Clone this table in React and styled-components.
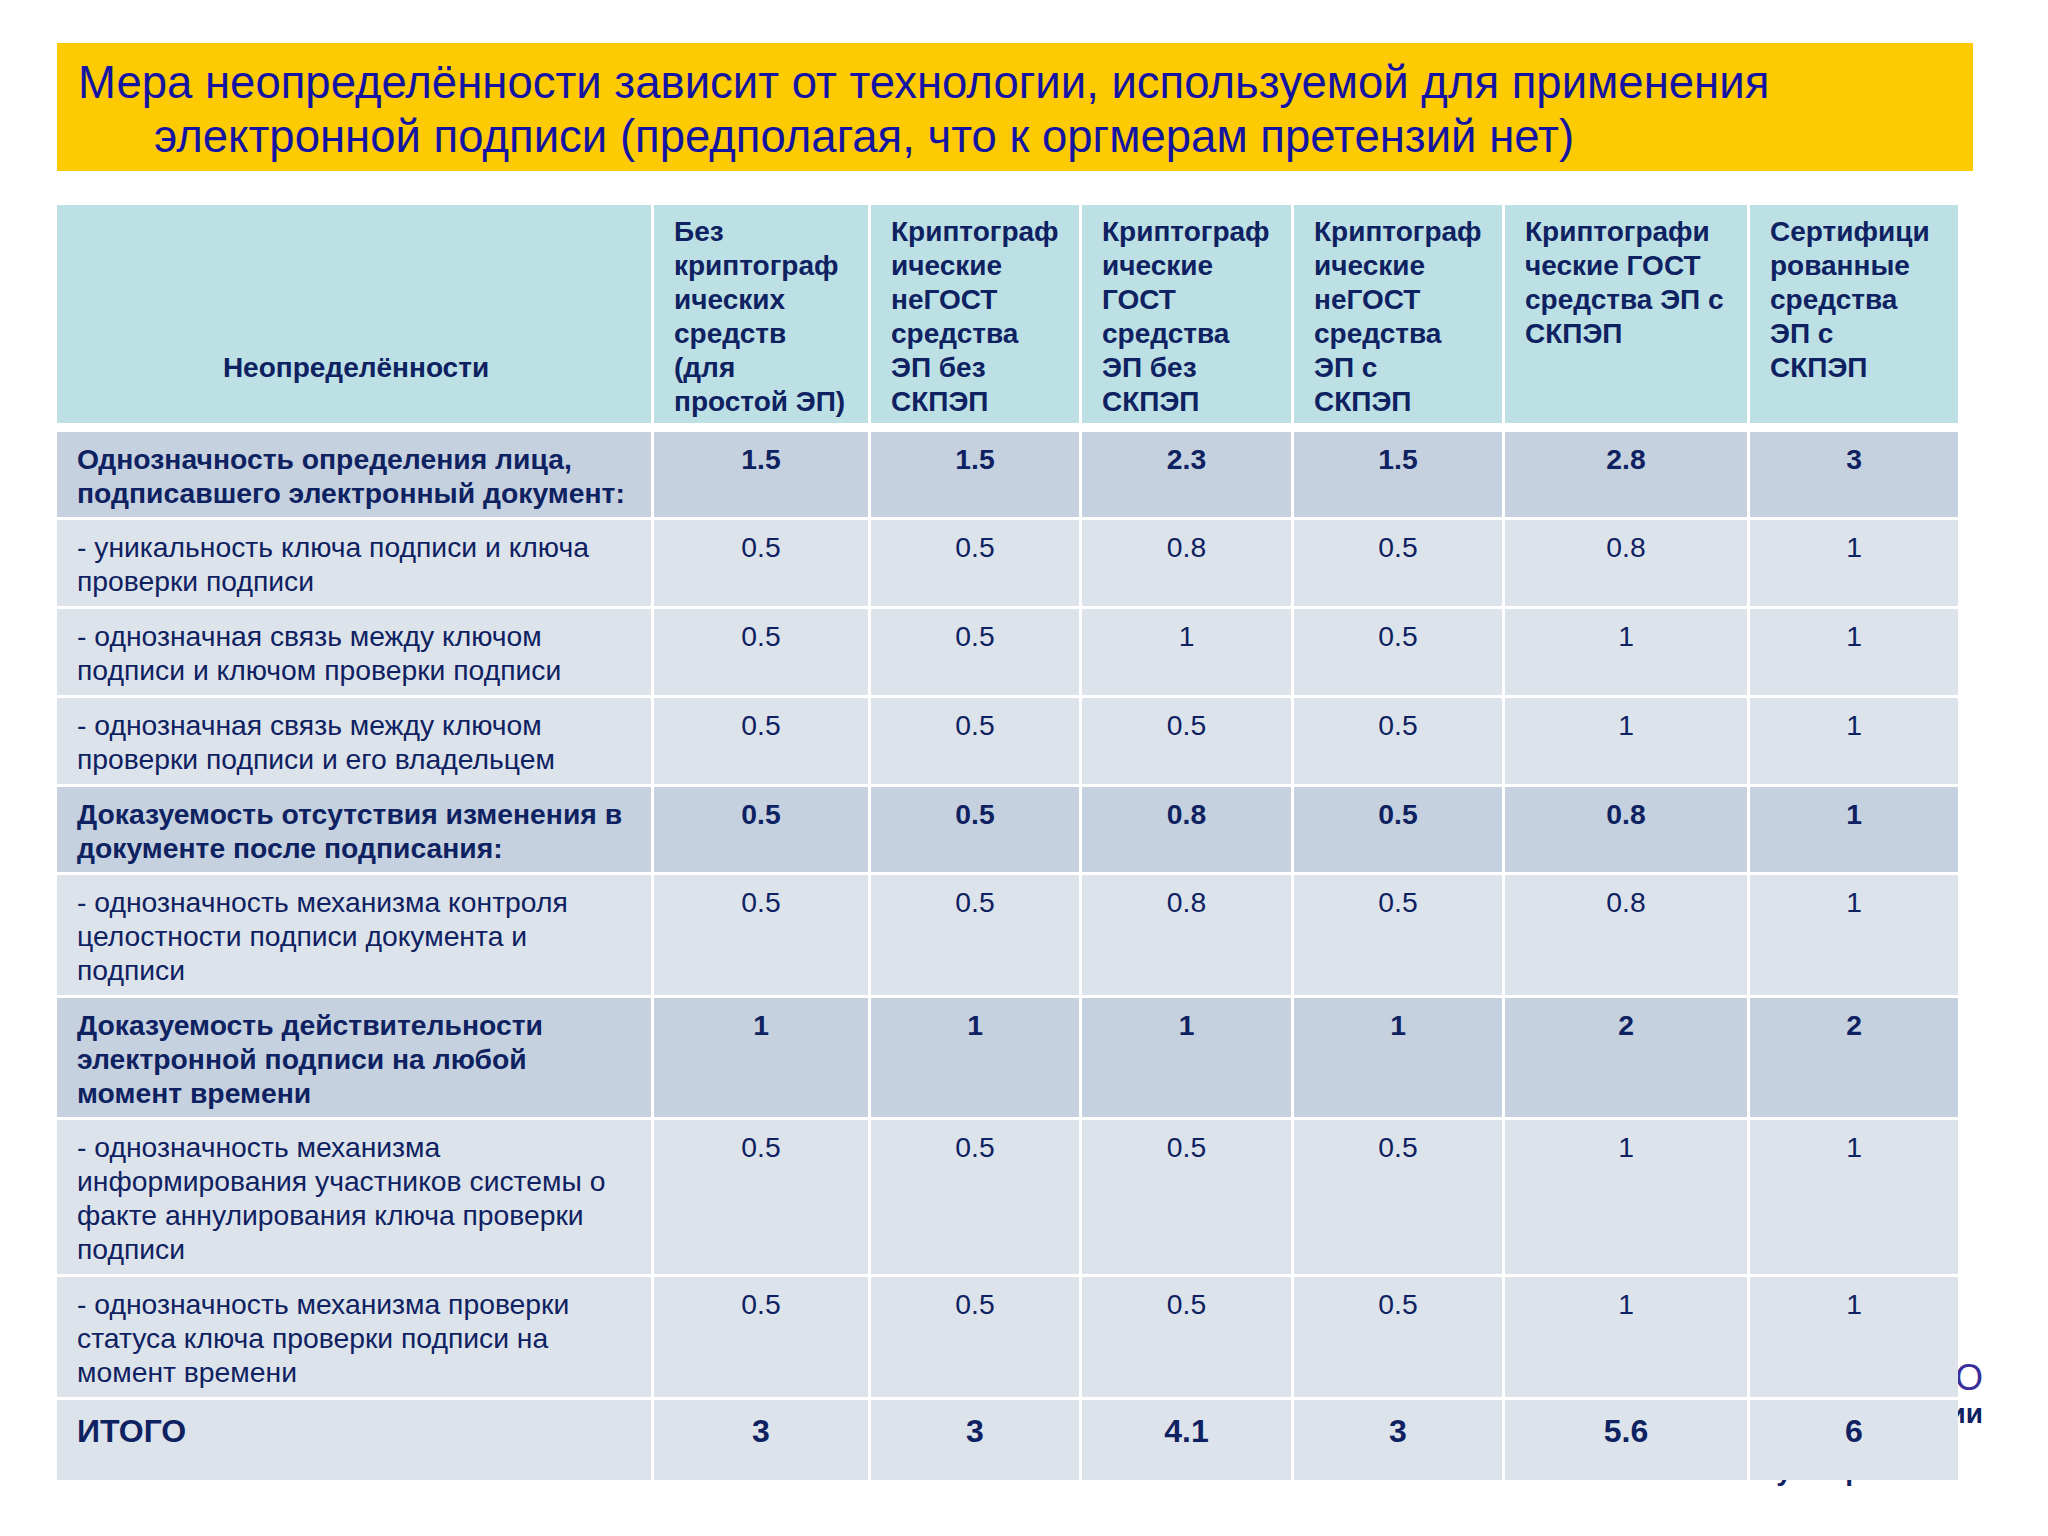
import React from "react";
import styled, { createGlobalStyle } from "styled-components";

const GlobalStyle = createGlobalStyle`
  body {
    margin: 0;
    background: #ffffff;
    font-family: "Liberation Sans", Arial, sans-serif;
  }
`;

const Page = styled.div`
  position: relative;
  width: 2048px;
  height: 1536px;
  padding: 43px 0 0 57px;
  box-sizing: border-box;
  overflow: hidden;
`;

const TitleBar = styled.div`
  width: 1916px;
  box-sizing: border-box;
  background: #fecb02;
  padding: 13px 20px 7px 97px;
  color: #1414a3;
  font-size: 45.5px;
  line-height: 54px;
  text-indent: -76px;
`;

const Peek = styled.div`
  position: absolute;
  right: 65px;
  top: 1358px;
  text-align: right;
  color: #0e2161;
  white-space: nowrap;
`;

const PeekLine = styled.div`
  font-size: ${(p) => p.$size}px;
  line-height: ${(p) => p.$size + 4}px;
  font-weight: ${(p) => (p.$bold ? 700 : 400)};
  color: ${(p) => p.$color || "inherit"};
  margin-top: ${(p) => p.$gap || 0}px;
  padding-right: ${(p) => p.$inset || 0}px;
`;

const Table = styled.div`
  position: relative;
  z-index: 1;
  margin-top: 34px;
  width: 1901px;
  background: #ffffff;
  display: flex;
  flex-direction: column;
  gap: 3px;
  color: #0e2161;
`;

const Row = styled.div`
  display: grid;
  grid-template-columns: 594px 214px 208px 209px 208px 242px 208px;
  gap: 3px;
  margin-bottom: ${(p) => (p.$head ? 6 : 0)}px;
`;

const bg = {
  head: "#bde0e5",
  group: "#c5d1df",
  item: "#dde3eb",
  total: "#dde3eb",
};

const pad = {
  group: "10px 20px 7px",
  item: "10px 20px 8px",
  total: "12px 20px 30px",
};

const HeadCell = styled.div`
  background: ${bg.head};
  padding: 10px 16px 4px 20px;
  font-size: 28px;
  line-height: 34px;
  font-weight: 700;
  white-space: nowrap;
  display: flex;
  flex-direction: column;
  justify-content: ${(p) => (p.$center ? "flex-end" : "flex-start")};
  align-items: ${(p) => (p.$center ? "center" : "flex-start")};
  padding-bottom: ${(p) => (p.$center ? 38 : 4)}px;
`;

const Cell = styled.div`
  background: ${(p) => bg[p.$kind]};
  padding: ${(p) => pad[p.$kind]};
  font-size: ${(p) => (p.$kind === "total" ? 32 : 28.3)}px;
  line-height: ${(p) => (p.$kind === "total" ? 38 : 34)}px;
  font-weight: ${(p) => (p.$kind === "item" ? 400 : 700)};
  text-align: ${(p) => (p.$num ? "center" : "left")};
  white-space: nowrap;
`;

const headers = [
  ["Без", "криптограф", "ических", "средств", "(для", "простой ЭП)"],
  ["Криптограф", "ические", "неГОСТ", "средства", "ЭП без", "СКПЭП"],
  ["Криптограф", "ические", "ГОСТ", "средства", "ЭП без", "СКПЭП"],
  ["Криптограф", "ические", "неГОСТ", "средства", "ЭП с", "СКПЭП"],
  ["Криптографи", "ческие ГОСТ", "средства ЭП с", "СКПЭП"],
  ["Сертифици", "рованные", "средства", "ЭП с", "СКПЭП"],
];

const rows = [
  {
    kind: "group",
    label: ["Однозначность определения лица,", "подписавшего электронный документ:"],
    vals: ["1.5", "1.5", "2.3", "1.5", "2.8", "3"],
  },
  {
    kind: "item",
    label: ["- уникальность ключа подписи и ключа", "проверки подписи"],
    vals: ["0.5", "0.5", "0.8", "0.5", "0.8", "1"],
  },
  {
    kind: "item",
    label: ["- однозначная связь между ключом", "подписи и ключом проверки подписи"],
    vals: ["0.5", "0.5", "1", "0.5", "1", "1"],
  },
  {
    kind: "item",
    label: ["- однозначная связь между ключом", "проверки подписи и его владельцем"],
    vals: ["0.5", "0.5", "0.5", "0.5", "1", "1"],
  },
  {
    kind: "group",
    label: ["Доказуемость отсутствия изменения в", "документе после подписания:"],
    vals: ["0.5", "0.5", "0.8", "0.5", "0.8", "1"],
  },
  {
    kind: "item",
    label: [
      "- однозначность механизма контроля",
      "целостности подписи документа и",
      "подписи",
    ],
    vals: ["0.5", "0.5", "0.8", "0.5", "0.8", "1"],
  },
  {
    kind: "group",
    label: [
      "Доказуемость действительности",
      "электронной подписи на любой",
      "момент времени",
    ],
    vals: ["1", "1", "1", "1", "2", "2"],
  },
  {
    kind: "item",
    label: [
      "- однозначность механизма",
      "информирования участников системы о",
      "факте аннулирования ключа проверки",
      "подписи",
    ],
    vals: ["0.5", "0.5", "0.5", "0.5", "1", "1"],
  },
  {
    kind: "item",
    label: [
      "- однозначность механизма проверки",
      "статуса ключа проверки подписи на",
      "момент времени",
    ],
    vals: ["0.5", "0.5", "0.5", "0.5", "1", "1"],
  },
  {
    kind: "total",
    label: ["ИТОГО"],
    vals: ["3", "3", "4.1", "3", "5.6", "6"],
  },
];

const Lines = ({ items }) =>
  items.map((line, i) => (
    <React.Fragment key={i}>
      {i > 0 && <br />}
      {line}
    </React.Fragment>
  ));

const App = () => {
  return (
    <Page>
      <GlobalStyle />
      <TitleBar>
        Мера неопределённости зависит от технологии, используемой для применения
        электронной подписи (предполагая, что к оргмерам претензий нет)
      </TitleBar>

      <Peek>
        <PeekLine $size={36} $color="#3b2f9c">
          ТЕХНОЛОГИИ И ПРАВО
        </PeekLine>
        <PeekLine $size={28} $bold>
          электронные технологии
        </PeekLine>
        <PeekLine $size={28} $bold $gap={25} $inset={40}>
          учёт рисков
        </PeekLine>
      </Peek>

      <Table>
        <Row $head>
          <HeadCell $center>Неопределённости</HeadCell>
          {headers.map((h, i) => (
            <HeadCell key={i}>
              <div>
                <Lines items={h} />
              </div>
            </HeadCell>
          ))}
        </Row>
        {rows.map((r, i) => (
          <Row key={i}>
            <Cell $kind={r.kind}>
              <Lines items={r.label} />
            </Cell>
            {r.vals.map((v, j) => (
              <Cell key={j} $kind={r.kind} $num>
                {v}
              </Cell>
            ))}
          </Row>
        ))}
      </Table>
    </Page>
  );
};

export default App;
